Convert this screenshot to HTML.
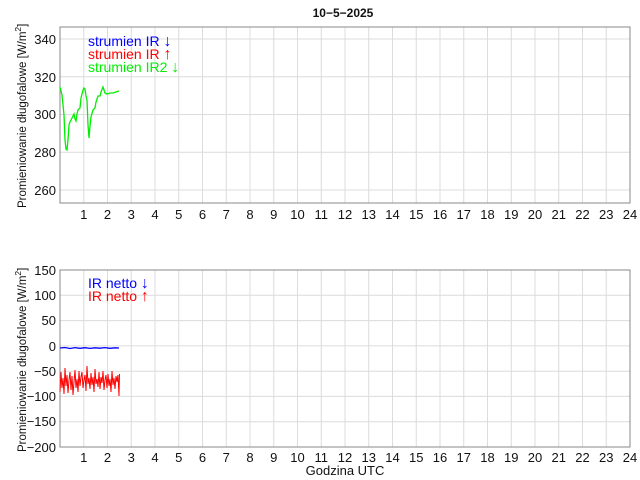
<!DOCTYPE html>
<html><head><meta charset="utf-8"><style>
body{margin:0;width:640px;height:480px;background:#fff;overflow:hidden}
svg{display:block}
text{font-family:"Liberation Sans","DejaVu Sans",sans-serif;font-size:13px;fill:#111}
</style></head><body>
<svg width="640" height="480" viewBox="0 0 640 480">
<text x="343" y="17" text-anchor="middle" font-weight="bold" style="font-size:12px">10−5−2025</text>
<g stroke="#dcdcdc" stroke-width="1">
<path d="M83.75 27V203M107.5 27V203M131.25 27V203M155 27V203M178.75 27V203M202.5 27V203M226.25 27V203M250 27V203M273.75 27V203M297.5 27V203M321.25 27V203M345 27V203M368.75 27V203M392.5 27V203M416.25 27V203M440 27V203M463.75 27V203M487.5 27V203M511.25 27V203M535 27V203M558.75 27V203M582.5 27V203M606.25 27V203"/>
<path d="M60 39H630M60 76.75H630M60 114.5H630M60 152.25H630M60 190H630"/>
<path d="M83.75 270V447M107.5 270V447M131.25 270V447M155 270V447M178.75 270V447M202.5 270V447M226.25 270V447M250 270V447M273.75 270V447M297.5 270V447M321.25 270V447M345 270V447M368.75 270V447M392.5 270V447M416.25 270V447M440 270V447M463.75 270V447M487.5 270V447M511.25 270V447M535 270V447M558.75 270V447M582.5 270V447M606.25 270V447"/>
<path d="M60 295.3H630M60 320.6H630M60 345.9H630M60 371.2H630M60 396.4H630M60 421.7H630"/>
</g>
<rect x="60" y="27" width="570" height="176" fill="none" stroke="#888"/>
<rect x="60" y="270" width="570" height="177" fill="none" stroke="#888"/>
<g text-anchor="end">
<text x="56" y="44">340</text><text x="56" y="82">320</text><text x="56" y="119">300</text><text x="56" y="157">280</text><text x="56" y="195">260</text>
<text x="56" y="275">150</text><text x="56" y="300">100</text><text x="56" y="325">50</text><text x="56" y="351">0</text><text x="56" y="376">−50</text><text x="56" y="401">−100</text><text x="56" y="426">−150</text><text x="56" y="452">−200</text>
</g>
<g text-anchor="middle">
<text x="83.75" y="219">1</text><text x="107.5" y="219">2</text><text x="131.25" y="219">3</text><text x="155" y="219">4</text><text x="178.75" y="219">5</text><text x="202.5" y="219">6</text><text x="226.25" y="219">7</text><text x="250" y="219">8</text><text x="273.75" y="219">9</text><text x="297.5" y="219">10</text><text x="321.25" y="219">11</text><text x="345" y="219">12</text><text x="368.75" y="219">13</text><text x="392.5" y="219">14</text><text x="416.25" y="219">15</text><text x="440" y="219">16</text><text x="463.75" y="219">17</text><text x="487.5" y="219">18</text><text x="511.25" y="219">19</text><text x="535" y="219">20</text><text x="558.75" y="219">21</text><text x="582.5" y="219">22</text><text x="606.25" y="219">23</text><text x="630" y="219">24</text>
<text x="83.75" y="462">1</text><text x="107.5" y="462">2</text><text x="131.25" y="462">3</text><text x="155" y="462">4</text><text x="178.75" y="462">5</text><text x="202.5" y="462">6</text><text x="226.25" y="462">7</text><text x="250" y="462">8</text><text x="273.75" y="462">9</text><text x="297.5" y="462">10</text><text x="321.25" y="462">11</text><text x="345" y="462">12</text><text x="368.75" y="462">13</text><text x="392.5" y="462">14</text><text x="416.25" y="462">15</text><text x="440" y="462">16</text><text x="463.75" y="462">17</text><text x="487.5" y="462">18</text><text x="511.25" y="462">19</text><text x="535" y="462">20</text><text x="558.75" y="462">21</text><text x="582.5" y="462">22</text><text x="606.25" y="462">23</text><text x="630" y="462">24</text>
<text x="345" y="475">Godzina UTC</text>
</g>
<text transform="translate(26,208) rotate(-90)" style="font-size:11.5px">Promieniowanie długofalowe [W/m<tspan dy="-5" style="font-size:8.5px">2</tspan><tspan dy="5">]</tspan></text>
<text transform="translate(26,452) rotate(-90)" style="font-size:11.5px">Promieniowanie długofalowe [W/m<tspan dy="-5" style="font-size:8.5px">2</tspan><tspan dy="5">]</tspan></text>
<g style="font-size:14px">
<text x="88" y="46" style="fill:#0000ff;font-size:14px">strumien IR <tspan style="font-size:16px">↓</tspan></text>
<text x="88" y="59" style="fill:#ff0000;font-size:14px">strumien IR <tspan style="font-size:16px">↑</tspan></text>
<text x="88" y="72" style="fill:#00ee00;font-size:14px">strumien IR2 <tspan style="font-size:16px">↓</tspan></text>
<text x="88" y="288" style="fill:#0000ff;font-size:14px">IR netto <tspan style="font-size:16px">↓</tspan></text>
<text x="88" y="301" style="fill:#ff0000;font-size:14px">IR netto <tspan style="font-size:16px">↑</tspan></text>
</g>
<polyline fill="none" stroke="#00ee00" stroke-width="1.3" points="60,87 62,95 64,115 65,140 66,149 67,150 68,140 69,125 70,122 72,118 73,116 74,114 75,119 76,121 77,114 78,110 80,108 81,98 83,90 84,88 85,89 86,96 87,100 88,125 89,138 90,126 91,117 93,110 95,108 96,102 98,96 100,96 101,92 103,87 104,90 105,93 107,94 110,93 113,93 116,92 119,91"/>
<polyline fill="none" stroke="#0000ff" stroke-width="1.3" points="60,348 65,347.5 70,348.5 75,347.6 80,348.3 85,347.7 90,348.4 95,347.8 100,348.2 105,347.6 110,348.3 115,347.8 119,348"/>
<polyline fill="none" stroke="#ff0000" stroke-width="1" points="60,392 61,372 62,388 63,378 64,394 65,368 66,386 67,375 68,393 69,380 70,372 71,390 72,376 73,395 74,382 75,370 76,388 77,379 78,392 79,371 80,386 81,377 82,372 83,388 84,380 85,375 86,391 87,366 88,384 89,378 90,389 91,373 92,385 93,377 94,392 95,369 96,384 97,379 98,387 99,372 100,389 101,377 102,383 103,371 104,390 105,380 106,375 107,388 108,374 109,386 110,379 111,392 112,371 113,385 114,378 115,389 116,376 117,382 118,375 119,396 119.5,374"/>
</svg>
</body></html>
